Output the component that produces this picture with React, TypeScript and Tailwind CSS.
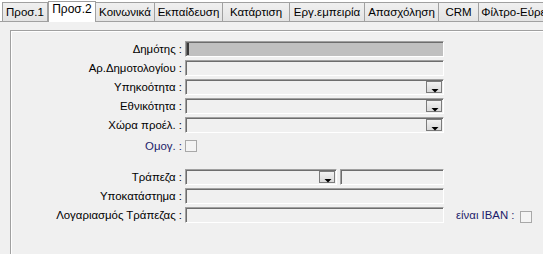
import React from "react";

const tabs: { label: string; w: number }[] = [
  { label: "Προσ.1", w: 46 },
  { label: "Προσ.2", w: 48 },
  { label: "Κοινωνικά", w: 60 },
  { label: "Εκπαίδευση", w: 69 },
  { label: "Κατάρτιση", w: 68 },
  { label: "Εργ.εμπειρία", w: 76 },
  { label: "Απασχόληση", w: 75 },
  { label: "CRM", w: 41 },
  { label: "Φίλτρο-Εύρεσης", w: 90 },
];

function Arrow() {
  return (
    <svg width="16" height="12" viewBox="0 0 16 12" className="block">
      <polygon points="4.5,7 11.5,7 8,10.5" fill="#000" />
    </svg>
  );
}

function Input({ w, combo, bg, caret }: { w: number; combo?: boolean; bg?: string; caret?: boolean }) {
  return (
    <div
      className={`h-[16px] flex items-start justify-end border-t border-l border-t-[#a0a0a0] border-l-[#a0a0a0] border-b border-r border-b-white border-r-white shadow-[inset_1px_1px_0_#6d6d6d] pt-[1px] pr-[1px] ${
        bg ? bg : "bg-[#f0f0f0]"
      }`}
      style={{ width: w }}
    >
      {caret && <div className="mr-auto ml-[1px] w-[2px] h-[12px] bg-[#3a3a3a]" />}
      {combo && (
        <div className="w-[16px] h-[12px] border border-[#7b7b7b] bg-gradient-to-b from-[#f2f2f2] to-[#d9d9d9]">
          <Arrow />
        </div>
      )}
    </div>
  );
}

function Label({ children, blue }: { children: React.ReactNode; blue?: boolean }) {
  return (
    <div className={`w-[172px] pr-[1px] text-right whitespace-nowrap ${blue ? "text-[#1c1c6a]" : "text-black"}`}>
      {children}
    </div>
  );
}

function CheckBox() {
  return <div className="w-[12px] h-[12px] border border-[#a8a8a8] bg-[#f4f4f4]" />;
}

export default function App() {
  return (
    <div
      className="w-[543px] h-[254px] overflow-hidden bg-white flex flex-col text-[11.4px] leading-[13px]"
      style={{ fontFamily: '"Liberation Sans", Arial, sans-serif' }}
    >
      {/* tab strip */}
      <div className="h-[21px] flex items-end pl-[3px] shrink-0 relative z-10">
        {tabs.map((t, i) => {
          const active = i === 1;
          return (
            <div
              key={t.label}
              className={`shrink-0 flex justify-center whitespace-nowrap overflow-hidden border-t border-l border-r border-[#a0a0a0] text-[11.5px] ${
                active
                  ? "h-[21px] bg-white pt-[1px] -mb-px z-10 text-[12px]"
                  : "h-[19px] bg-gradient-to-b from-[#f0f0f0] to-[#e3e3e3] pt-[3px] -ml-px"
              }`}
              style={{ width: t.w }}
            >
              {t.label}
            </div>
          );
        })}
      </div>
      {/* panel */}
      <div className="flex-1 bg-[#f0f0f0] border-t border-[#a0a0a0] pl-[10px] pt-[8px] flex">
        <div className="flex-1 border-t border-l border-[#a0a0a0] shadow-[inset_1px_1px_0_#ffffff] pt-[10px] flex flex-col">
          <div className="flex items-center gap-[2px] h-[16px]">
            <Label>Δημότης :</Label>
            <Input w={259} bg="bg-[#c0c0c0]" caret />
          </div>
          <div className="flex items-center gap-[2px] h-[16px] mt-[3px]">
            <Label>Αρ.Δημοτολογίου :</Label>
            <Input w={259} />
          </div>
          <div className="flex items-center gap-[2px] h-[16px] mt-[3px]">
            <Label>Υπηκοότητα :</Label>
            <Input w={259} combo />
          </div>
          <div className="flex items-center gap-[2px] h-[16px] mt-[3px]">
            <Label>Εθνικότητα :</Label>
            <Input w={259} combo />
          </div>
          <div className="flex items-center gap-[2px] h-[16px] mt-[3px]">
            <Label>Χώρα προέλ. :</Label>
            <Input w={259} combo />
          </div>
          <div className="flex items-center gap-[2px] h-[12px] mt-[7px]">
            <Label blue>Ομογ. :</Label>
            <CheckBox />
          </div>
          <div className="flex items-center gap-[2px] h-[16px] mt-[17px]">
            <Label>Τράπεζα :</Label>
            <Input w={152} combo />
            <div className="ml-[1px]">
              <Input w={104} />
            </div>
          </div>
          <div className="flex items-center gap-[2px] h-[16px] mt-[3px]">
            <Label>Υποκατάστημα :</Label>
            <Input w={259} />
          </div>
          <div className="flex items-center gap-[2px] h-[16px] mt-[3px]">
            <Label>Λογαριασμός Τράπεζας :</Label>
            <Input w={259} />
            <div className="ml-[10px] text-[#1c1c6a] whitespace-nowrap">είναι IBAN :</div>
            <div className="ml-[3px] mt-[3px]">
              <CheckBox />
            </div>
          </div>
        </div>
      </div>
    </div>
  );
}
